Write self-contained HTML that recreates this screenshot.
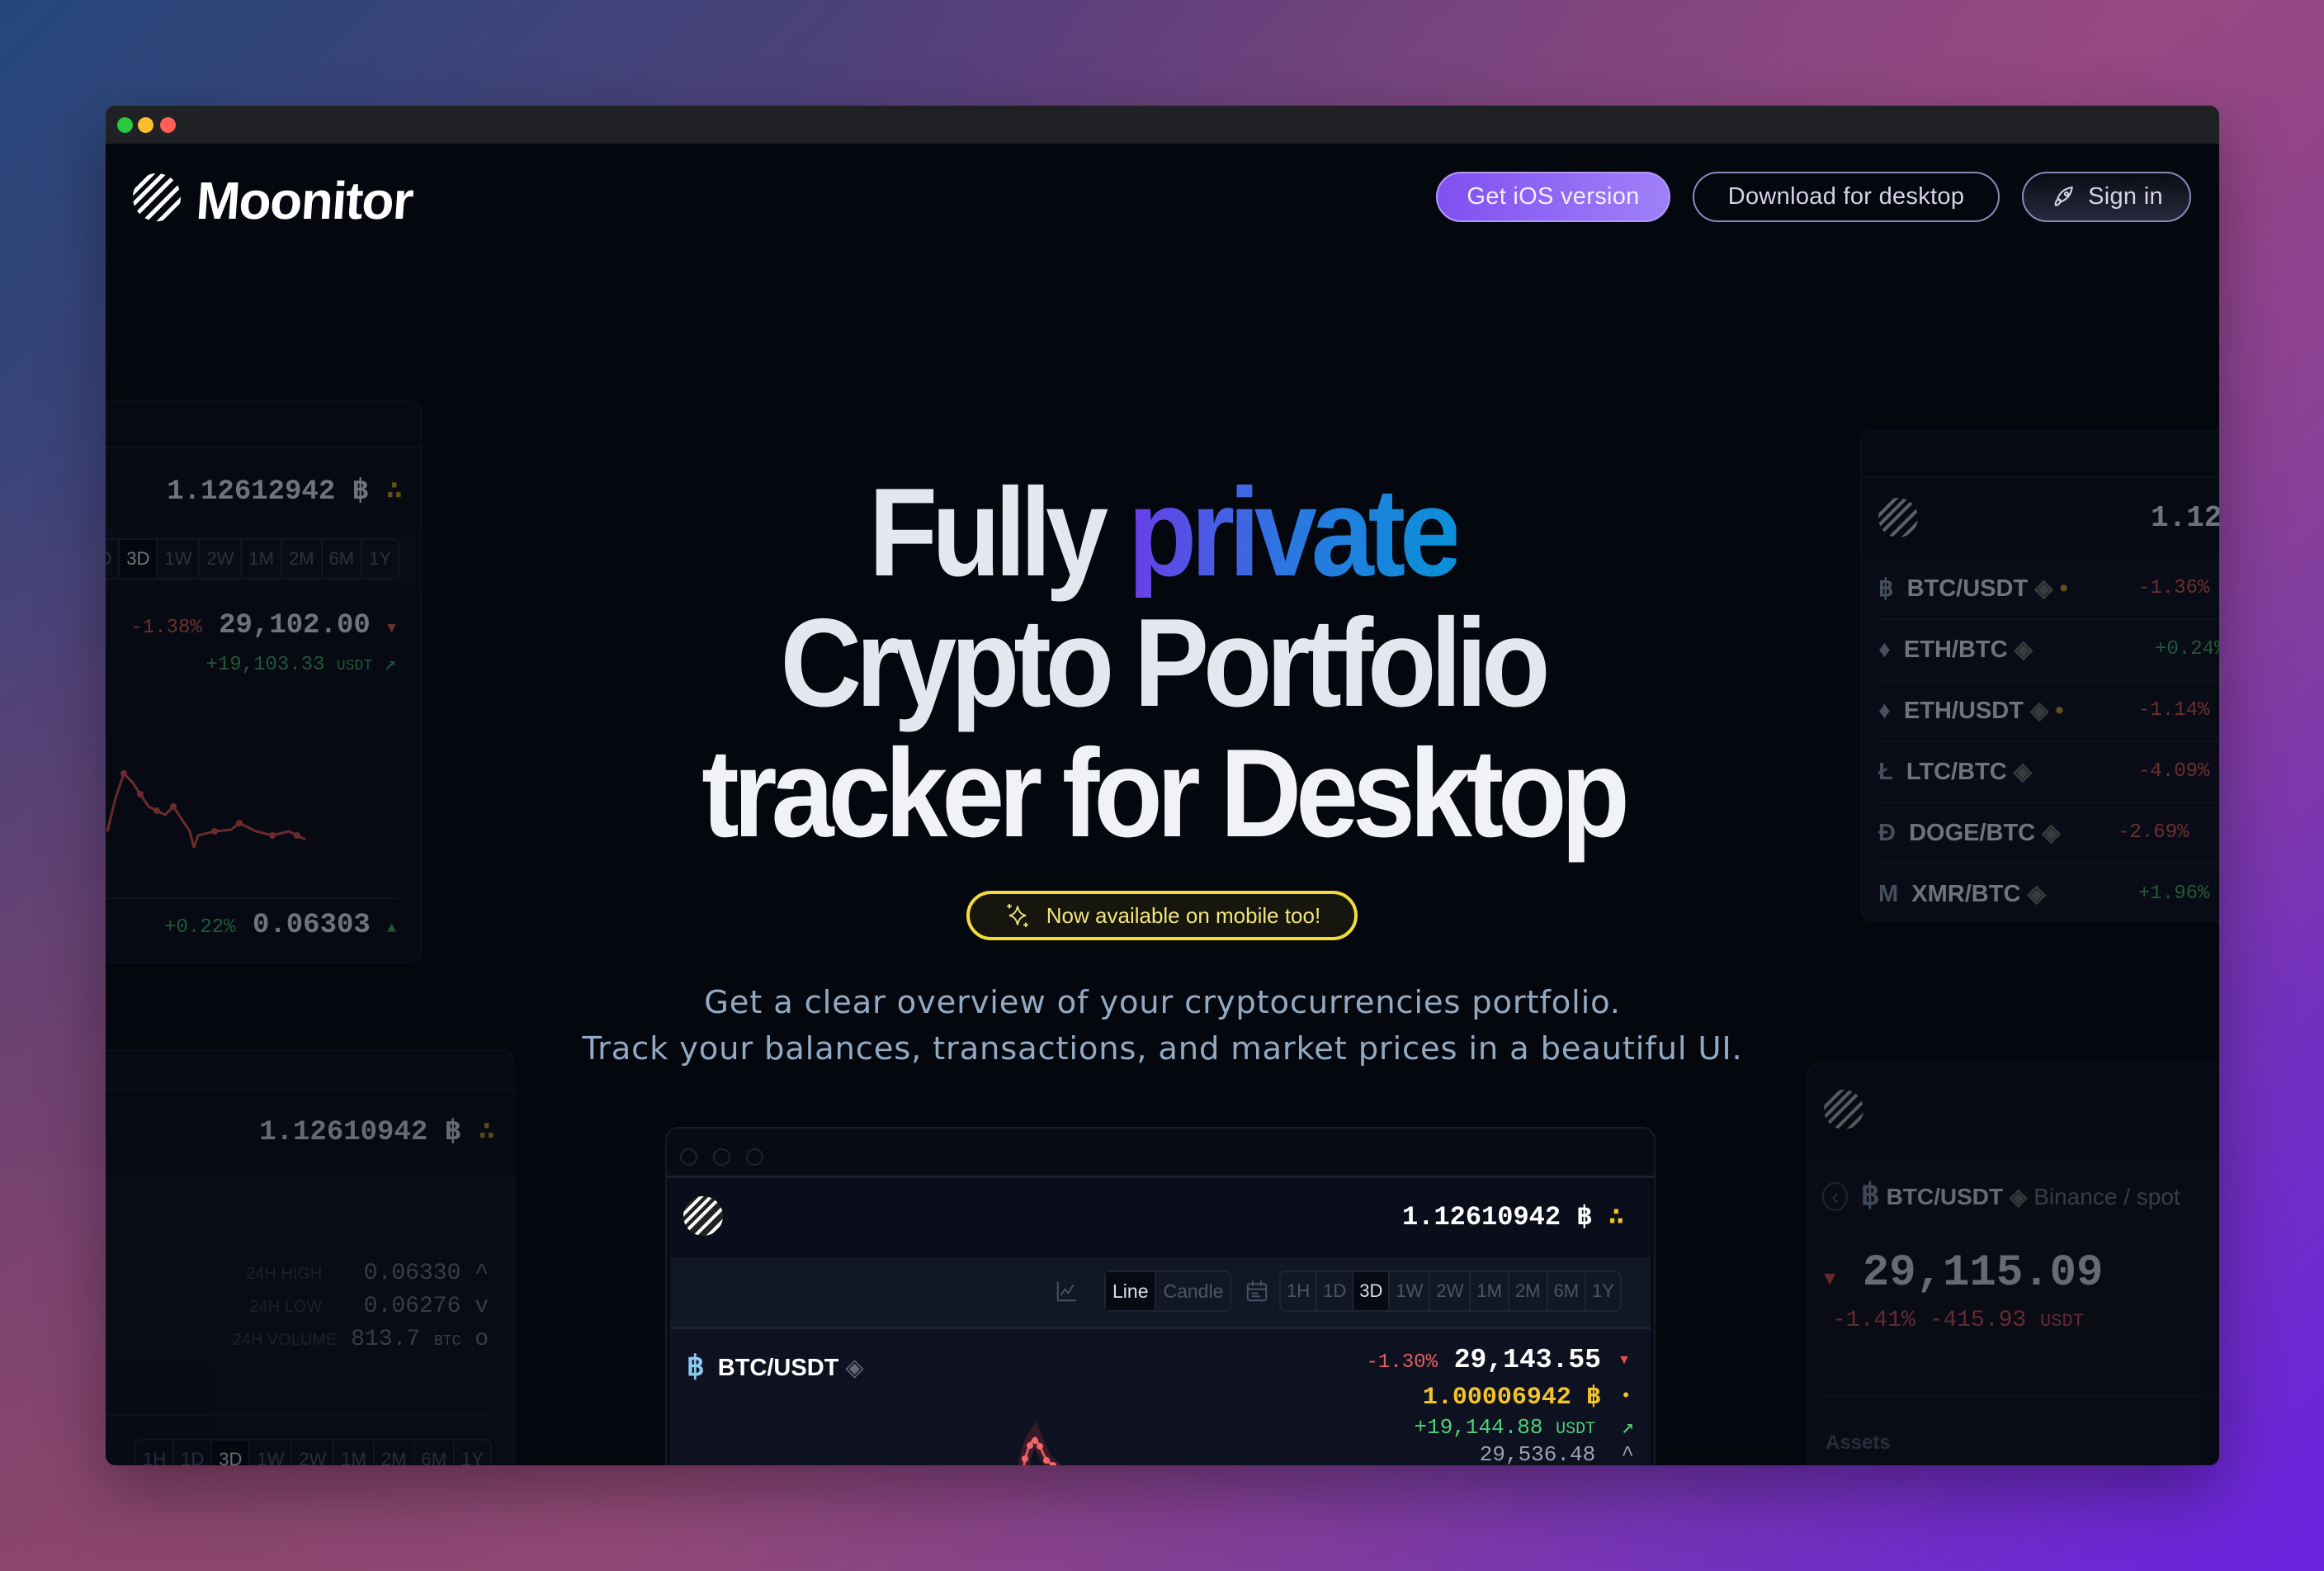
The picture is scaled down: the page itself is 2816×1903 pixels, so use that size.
<!DOCTYPE html>
<html><head><meta charset="utf-8"><style>
*{margin:0;padding:0;box-sizing:border-box}
html,body{width:2816px;height:1903px;overflow:hidden}
body{position:relative;font-family:"Liberation Sans",sans-serif;
background:linear-gradient(135deg,#23477a 0%,#5a3f7a 30%,#8a4a82 55%,#7a3aa8 75%,#6a22e0 100%);}
.bgo{position:absolute;inset:0;background:radial-gradient(ellipse at 0% 100%,rgba(150,70,100,.7),rgba(150,70,100,0) 50%),radial-gradient(ellipse at 100% 0%,rgba(160,70,130,.6),rgba(160,70,130,0) 45%)}
.win{position:absolute;left:128px;top:128px;width:2561px;height:1647px;background:#05070f;border-radius:12px;overflow:hidden;box-shadow:0 30px 80px rgba(0,0,0,.35)}
.tb{position:absolute;left:0;top:0;right:0;height:46px;background:#202124}
.dot{position:absolute;top:14px;width:19px;height:19px;border-radius:50%}
.abs{position:absolute}
.mono{font-family:"Liberation Mono",monospace}
.btn{position:absolute;top:80px;height:61px;border-radius:31px;font-size:29px;color:#d6d3e6;display:flex;align-items:center;justify-content:center;letter-spacing:.3px}
.h1{position:absolute;left:0;width:2561px;text-align:center;font-weight:bold;font-size:152px;letter-spacing:-8px;color:#e3e7ef;line-height:158px}
.h1 span{display:inline-block;transform:scaleX(.9)}
.sub{position:absolute;left:0;width:2561px;text-align:center;font-family:"DejaVu Sans",sans-serif;font-size:38.5px;color:#92a9c2;letter-spacing:.8px}
.card{position:absolute;background:#0a0e18;border:2px solid #111726;border-radius:16px;overflow:hidden}
.tbtn{display:inline-block;height:46px;line-height:46px;padding:0 8px;font-size:22px;color:#4b5466;border-right:2px solid #1c2333}
</style></head><body>
<div class="bgo"></div>
<div class="win">
 <div class="tb"><div class="dot" style="left:14px;background:#27c93f"></div><div class="dot" style="left:39px;background:#ffbd2e"></div><div class="dot" style="left:66px;background:#ff5f57"></div></div>

 <svg class="abs" style="left:33px;top:82px" width="58" height="58" viewBox="0 0 58 58"><defs><clipPath id="c1"><circle cx="29" cy="29" r="29"/></clipPath></defs><g clip-path="url(#c1)" stroke="#fff" stroke-width="5"><line x1="-10" y1="20" x2="20" y2="-10"/><line x1="-10" y1="34" x2="34" y2="-10"/><line x1="-10" y1="48" x2="48" y2="-10"/><line x1="-6" y1="60" x2="60" y2="-6"/><line x1="8" y1="64" x2="64" y2="8"/><line x1="22" y1="68" x2="68" y2="22"/><line x1="36" y1="72" x2="72" y2="36"/></g></svg>
 <div class="abs" style="left:110px;top:78px;font-size:64px;font-weight:bold;color:#fff;letter-spacing:-1.5px;transform:skewX(-4deg)">Moonitor</div>

 <div class="btn" style="left:1612px;width:284px;background:linear-gradient(90deg,#8050f0,#a080f8);border:2px solid #b09af8;color:#f2eeff">Get iOS version</div>
 <div class="btn" style="left:1923px;width:372px;border:2px solid #8f86b8">Download for desktop</div>
 <div class="btn" style="left:2322px;width:205px;border:2px solid #8f86b8;background:linear-gradient(180deg,#0a0b14,#262a3c)"><svg width="32" height="32" viewBox="0 0 24 24" fill="none" stroke="#d6d3e6" stroke-width="1.6" style="margin-right:14px"><path d="M5 19c0-3 1-5 3-5s2 2 0 4-3 1-3 1z"/><path d="M9 15l-2-2c2-5 6-9 13-10-1 7-5 11-10 13z"/><circle cx="15" cy="9" r="1.5"/></svg>Sign in</div>

 <div class="card" style="left:-20px;top:357px;width:404px;height:682px;opacity:.55">
  <div class="abs" style="left:0;right:0;top:54px;height:2px;background:#161c2a"></div>
  <div class="abs mono" style="right:22px;top:86px;font-size:34px;font-weight:bold;color:#c8ccd6">1.12612942 ฿ <span style="color:#b08a20">∴</span></div>
  <div class="abs" style="left:0;right:0;top:155px;height:70px;background:#0d111c"></div>
  <div class="abs" style="right:26px;top:165px;border:2px solid #1c2333;border-radius:8px;display:flex"><span class="tbtn">1D</span><span class="tbtn" style="color:#c8ccd6;background:#05070f">3D</span><span class="tbtn">1W</span><span class="tbtn">2W</span><span class="tbtn">1M</span><span class="tbtn">2M</span><span class="tbtn">6M</span><span class="tbtn" style="border:0">1Y</span></div>
  <div class="abs mono" style="right:30px;top:252px;font-size:34px;font-weight:bold;color:#c8ccd6"><span style="font-size:24px;font-weight:normal;color:#c05050">-1.38%</span> 29,102.00 <span style="font-size:18px;color:#c05050">▼</span></div>
  <div class="abs mono" style="right:30px;top:302px;font-size:24px;color:#3a9a5a">+19,103.33 <span style="font-size:18px">USDT</span> ↗</div>
  <svg class="abs" style="left:0;top:380px" width="404" height="160"><polyline fill="none" stroke="#c04848" stroke-width="3" points="20,140 30,100 40,70 50,80 60,95 70,110 80,115 90,120 100,110 110,125 120,140 125,160 130,145 150,140 170,138 180,130 200,140 220,145 240,140 260,150"/><g fill="#c04848"><circle cx="40" cy="70" r="4"/><circle cx="60" cy="95" r="4"/><circle cx="80" cy="115" r="4"/><circle cx="100" cy="110" r="4"/><circle cx="150" cy="140" r="4"/><circle cx="180" cy="130" r="4"/><circle cx="220" cy="145" r="4"/><circle cx="250" cy="145" r="4"/></g></svg>
  <div class="abs" style="left:0;right:28px;top:600px;height:2px;background:#161c2a"></div>
  <div class="abs mono" style="right:30px;top:615px;font-size:34px;font-weight:bold;color:#c8ccd6"><span style="font-size:24px;font-weight:normal;color:#3a9a5a">+0.22%</span> 0.06303 <span style="font-size:18px;color:#3a9a5a">▲</span></div>
 </div>

 <div class="card" style="left:-20px;top:1143px;width:516px;height:540px;opacity:.5">
  <div class="abs" style="left:0;right:0;top:46px;height:2px;background:#161c2a"></div>
  <div class="abs mono" style="right:22px;top:76px;font-size:34px;font-weight:bold;color:#c8ccd6">1.12610942 ฿ <span style="color:#b08a20">∴</span></div>
  <div class="abs" style="left:0;right:0;top:150px;bottom:0;background:#0d111c"></div>
  <div class="abs mono" style="right:30px;top:250px;font-size:28px;color:#6a7282;line-height:40px;text-align:right"><span style="font-family:'Liberation Sans';font-size:20px;color:#343a48">24H HIGH</span> &nbsp; 0.06330 ^<br><span style="font-family:'Liberation Sans';font-size:20px;color:#343a48">24H LOW</span> &nbsp; 0.06276 v<br><span style="font-family:'Liberation Sans';font-size:20px;color:#343a48">24H VOLUME</span> 813.7 <span style="font-size:18px">BTC</span> o</div>
  <div class="abs" style="left:0;right:28px;top:440px;height:2px;background:#161c2a"></div>
  <div class="abs" style="right:26px;top:470px;border:2px solid #1c2333;border-radius:8px;display:flex"><span class="tbtn">1H</span><span class="tbtn">1D</span><span class="tbtn" style="color:#c8ccd6;background:#05070f">3D</span><span class="tbtn">1W</span><span class="tbtn">2W</span><span class="tbtn">1M</span><span class="tbtn">2M</span><span class="tbtn">6M</span><span class="tbtn" style="border:0">1Y</span></div>
 </div>

 <div class="card" style="left:2126px;top:393px;width:500px;height:596px;opacity:.55">
  <div class="abs" style="left:0;right:0;top:54px;height:2px;background:#161c2a"></div>
  <svg class="abs" style="left:20px;top:80px" width="48" height="48"><defs><clipPath id="c2"><circle cx="24" cy="24" r="24"/></clipPath></defs><g clip-path="url(#c2)" stroke="#aaa" stroke-width="4"><line x1="-5" y1="15" x2="15" y2="-5"/><line x1="-5" y1="27" x2="27" y2="-5"/><line x1="-5" y1="39" x2="39" y2="-5"/><line x1="-5" y1="51" x2="51" y2="-5"/><line x1="7" y1="55" x2="55" y2="7"/><line x1="19" y1="59" x2="59" y2="19"/></g></svg>
  <div class="abs mono" style="left:350px;top:84px;font-size:36px;font-weight:bold;color:#c8ccd6">1.126</div>
  <div class="abs" style="left:0;right:0;top:150px;bottom:0;background:#0d111c;font-size:29px;font-weight:bold;color:#c8ccd6">
   <div class="abs" style="left:20px;top:4px;width:480px;line-height:72px">
    <div style="border-bottom:2px solid #161c2a"><span style="color:#7a8aa0">฿</span> &nbsp;BTC/USDT <span style="color:#666">◈</span> <span style="color:#b08a20">•</span><span class="mono" style="position:absolute;left:315px;font-weight:normal;font-size:24px;color:#c05050">-1.36%</span></div>
    <div style="border-bottom:2px solid #161c2a"><span style="color:#7a8aa0">♦</span> &nbsp;ETH/BTC <span style="color:#666">◈</span><span class="mono" style="position:absolute;left:335px;font-weight:normal;font-size:24px;color:#3a9a5a">+0.24%</span></div>
    <div style="border-bottom:2px solid #161c2a"><span style="color:#7a8aa0">♦</span> &nbsp;ETH/USDT <span style="color:#666">◈</span> <span style="color:#b08a20">•</span><span class="mono" style="position:absolute;left:315px;font-weight:normal;font-size:24px;color:#c05050">-1.14%</span></div>
    <div style="border-bottom:2px solid #161c2a"><span style="color:#7a8aa0">Ł</span> &nbsp;LTC/BTC <span style="color:#666">◈</span><span class="mono" style="position:absolute;left:315px;font-weight:normal;font-size:24px;color:#c05050">-4.09%</span></div>
    <div style="border-bottom:2px solid #161c2a"><span style="color:#7a8aa0">Đ</span> &nbsp;DOGE/BTC <span style="color:#666">◈</span><span class="mono" style="position:absolute;left:290px;font-weight:normal;font-size:24px;color:#c05050">-2.69%</span></div>
    <div><span style="color:#7a8aa0">M</span> &nbsp;XMR/BTC <span style="color:#666">◈</span><span class="mono" style="position:absolute;left:315px;font-weight:normal;font-size:24px;color:#3a9a5a">+1.96%</span></div>
   </div>
  </div>
 </div>

 <div class="card" style="left:2060px;top:1160px;width:560px;height:540px;opacity:.5">
  <svg class="abs" style="left:20px;top:30px" width="48" height="48"><g clip-path="url(#c2)" stroke="#aaa" stroke-width="4"><line x1="-5" y1="15" x2="15" y2="-5"/><line x1="-5" y1="27" x2="27" y2="-5"/><line x1="-5" y1="39" x2="39" y2="-5"/><line x1="-5" y1="51" x2="51" y2="-5"/><line x1="7" y1="55" x2="55" y2="7"/><line x1="19" y1="59" x2="59" y2="19"/></g></svg>
  <div class="abs" style="left:0;right:0;top:110px;bottom:0;background:#0d111c"></div>
  <div class="abs" style="left:18px;top:136px;font-size:28px;font-weight:bold;color:#c8ccd6"><span style="color:#555;border:2px solid #444;border-radius:50%;padding:0 9px;font-weight:normal">‹</span> &nbsp;<span style="color:#7a8aa0;font-size:36px">฿</span> BTC/USDT <span style="color:#666">◈</span> <span style="font-weight:normal;color:#6a7282">Binance / spot</span></div>
  <div class="abs mono" style="left:20px;top:222px;font-size:54px;font-weight:bold;color:#c8ccd6"><span style="font-size:24px;color:#c05050">▼</span> 29,115.09</div>
  <div class="abs mono" style="left:30px;top:294px;font-size:28px;color:#c05050">-1.41% -415.93 <span style="font-size:22px">USDT</span></div>
  <div class="abs" style="left:20px;right:0;top:400px;height:2px;background:#161c2a"></div>
  <div class="abs" style="left:22px;top:444px;font-size:24px;font-weight:bold;color:#4b5466">Assets</div>
 </div>

 <div class="h1" style="top:438px"><span>Fully <span style="background:linear-gradient(90deg,#6a3de8,#2a78e0,#0a90d8);-webkit-background-clip:text;background-clip:text;color:transparent;transform:none">private</span></span></div>
 <div class="h1" style="top:596px"><span>Crypto Portfolio</span></div>
 <div class="h1" style="top:754px;color:#f0f2f6"><span>tracker for Desktop</span></div>

 <div class="abs" style="left:1043px;top:951px;width:474px;height:60px;border:4px solid #f2dc3a;border-radius:30px;background:#16160f;display:flex;align-items:center;justify-content:center;font-size:26px;color:#f2e47a">
  <svg width="34" height="34" viewBox="0 0 24 24" fill="none" stroke="#f2e47a" stroke-width="1.3" style="margin-right:18px"><path d="M12 4c1 5 3 7 7 8-4 1-6 3-7 8-1-5-3-7-7-8 4-1 6-3 7-8z"/><path d="M5 2v4M3 4h4M19 18v4M17 20h4"/></svg>Now available on mobile too!</div>

 <div class="sub" style="top:1064px">Get a clear overview of your cryptocurrencies portfolio.</div>
 <div class="sub" style="top:1120px">Track your balances, transactions, and market prices in a beautiful UI.</div>

 <div class="card" style="left:678px;top:1237px;width:1200px;height:440px;background:#080b15;border-color:#161c2a">
  <div class="abs" style="left:16px;top:24px;width:21px;height:21px;border:2px solid #1e2434;border-radius:50%"></div>
  <div class="abs" style="left:56px;top:24px;width:21px;height:21px;border:2px solid #1e2434;border-radius:50%"></div>
  <div class="abs" style="left:96px;top:24px;width:21px;height:21px;border:2px solid #1e2434;border-radius:50%"></div>
  <div class="abs" style="left:0;right:0;top:57px;height:3px;background:#1a2030"></div>
  <div class="abs" style="left:4px;right:4px;top:60px;height:96px;background:#0a0e1a"></div>
  <svg class="abs" style="left:20px;top:82px" width="48" height="48"><defs><clipPath id="c3"><circle cx="24" cy="24" r="24"/></clipPath></defs><circle cx="24" cy="24" r="24" fill="#222"/><g clip-path="url(#c3)" stroke="#fff" stroke-width="4"><line x1="-5" y1="15" x2="15" y2="-5"/><line x1="-5" y1="27" x2="27" y2="-5"/><line x1="-5" y1="39" x2="39" y2="-5"/><line x1="-5" y1="51" x2="51" y2="-5"/><line x1="7" y1="55" x2="55" y2="7"/><line x1="19" y1="59" x2="59" y2="19"/></g></svg>
  <div class="abs mono" style="right:36px;top:86px;font-size:32px;font-weight:bold;color:#fff">1.12610942 ฿ <span style="color:#f2c32a">∴</span></div>
  <div class="abs" style="left:4px;right:4px;top:156px;height:84px;background:#121725"></div>
  <svg class="abs" style="left:470px;top:182px" width="30" height="30" viewBox="0 0 24 24" fill="none" stroke="#4b5466" stroke-width="1.5"><path d="M3 3v18h18M6 16l4-6 3 4 5-8"/></svg>
  <div class="abs" style="left:530px;top:172px;border:2px solid #1e2434;border-radius:8px;display:flex;height:50px"><span class="tbtn" style="color:#dde;background:#070a12;font-size:23px">Line</span><span class="tbtn" style="border:0;font-size:23px">Candle</span></div>
  <svg class="abs" style="left:700px;top:180px" width="30" height="34" viewBox="0 0 24 24" fill="none" stroke="#4b5466" stroke-width="1.5"><rect x="3" y="5" width="18" height="16" rx="2"/><path d="M3 10h18M8 2v5M16 2v5M7 14h6M7 17h8"/></svg>
  <div class="abs" style="left:742px;top:172px;border:2px solid #1e2434;border-radius:8px;display:flex;height:50px"><span class="tbtn" style="font-size:22px;padding:0 7px">1H</span><span class="tbtn" style="font-size:22px;padding:0 7px">1D</span><span class="tbtn" style="color:#dde;background:#070a12;font-size:22px;padding:0 7px">3D</span><span class="tbtn" style="font-size:22px;padding:0 7px">1W</span><span class="tbtn" style="font-size:22px;padding:0 7px">2W</span><span class="tbtn" style="font-size:22px;padding:0 7px">1M</span><span class="tbtn" style="font-size:22px;padding:0 7px">2M</span><span class="tbtn" style="font-size:22px;padding:0 7px">6M</span><span class="tbtn" style="border:0;font-size:22px;padding:0 7px">1Y</span></div>
  <div class="abs" style="left:4px;right:4px;top:240px;height:3px;background:#1c2232"></div>
  <div class="abs" style="left:4px;right:4px;top:243px;bottom:0;background:#0e1220"></div>
  <div class="abs" style="left:24px;top:268px;font-size:29px;font-weight:bold;color:#fff"><span style="color:#8cc8f0;font-size:34px">฿</span> &nbsp;BTC/USDT <span style="color:#667;font-weight:normal">◈</span></div>
  <svg class="abs" style="left:420px;top:330px" width="160" height="110"><path d="M8 110 L14 70 L20 50 L26 40 L32 55 L40 70 L55 85 L70 95 L80 90 L90 100 L100 95" fill="none" stroke="#3a1a28" stroke-width="14"/><polyline fill="none" stroke="#e05a5a" stroke-width="3" points="8,110 14,70 20,52 26,45 32,55 40,72 48,78 55,85 62,92 70,95 80,90 90,100"/><g fill="#f06868"><circle cx="14" cy="70" r="4"/><circle cx="20" cy="54" r="4"/><circle cx="26" cy="48" r="4"/><circle cx="32" cy="55" r="4"/><circle cx="40" cy="72" r="4"/><circle cx="48" cy="78" r="4"/><circle cx="55" cy="85" r="4"/><circle cx="62" cy="92" r="4"/><circle cx="80" cy="92" r="4"/></g></svg>
  <div class="abs mono" style="right:64px;top:262px;font-size:33px;font-weight:bold;color:#fff"><span style="font-size:24px;font-weight:normal;color:#e06060">-1.30%</span> 29,143.55</div>
  <div class="abs" style="right:28px;top:272px;font-size:16px;color:#e05050">▼</div>
  <div class="abs mono" style="right:64px;top:306px;font-size:30px;font-weight:bold;color:#f2c32a">1.00006942 ฿</div>
  <div class="abs" style="right:30px;top:310px;font-size:22px;color:#f2c32a">•</div>
  <div class="abs mono" style="right:24px;top:346px;font-size:26px;color:#4fcf78">+19,144.88 <span style="font-size:20px">USDT</span> &nbsp;↗</div>
  <div class="abs mono" style="right:24px;top:380px;font-size:26px;color:#9aa2b2">29,536.48 &nbsp;^</div>
 </div>
</div>
</body></html>
